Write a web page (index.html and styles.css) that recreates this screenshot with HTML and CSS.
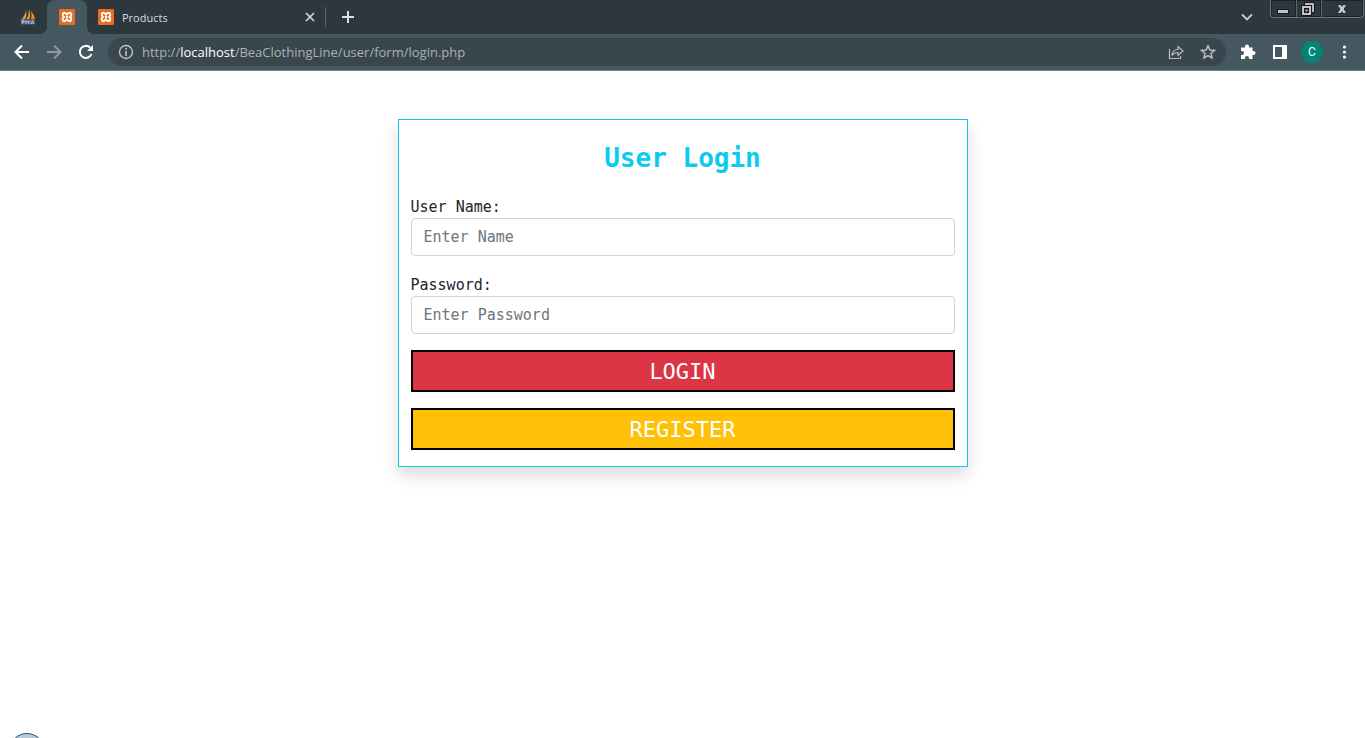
FILE: index.html
```html
<!DOCTYPE html>
<html lang="en">
<head>
<meta charset="utf-8">
<meta name="viewport" content="width=device-width, initial-scale=1">
<title>User Login</title>
<link rel="stylesheet" href="styles.css">
</head>
<body>
<svg class="defs" aria-hidden="true">
  <symbol id="xampp" viewBox="0 0 16 16">
    <rect width="16" height="16" rx="1" fill="#ea6c1d"/>
    <path d="M8 5.500Q6.500 3.800 5 3.800Q3.600 4 3.700 5.800Q3.800 7.200 5 8Q3.800 8.800 3.700 10.200Q3.600 12 5 12.200Q6.500 12.200 8 10.500Q9.500 12.200 11 12.200Q12.400 12 12.300 10.200Q12.200 8.800 11 8Q12.200 7.200 12.300 5.800Q12.400 4 11 3.800Q9.500 3.800 8 5.500ZM7 8H9" fill="none" stroke="#fff" stroke-width="1.900"/>
  </symbol>
</svg>
<header class="browser">
  <div class="tab-strip">
    <button class="tab tab-pinned" aria-label="phpMyAdmin">
      <svg width="16" height="16" viewBox="0 0 16 16"><path d="M6 1Q7 6 5.500 10L1 11Q5 7 6 1Z" fill="#d9a35a"/><path d="M9 0Q11 5 9.500 10L6.500 10.500Q9 6 9 0Z" fill="#f89c0e"/><path d="M11 2Q14 5 15 10L11 10.500Q12 6 11 2Z" fill="#f58a08"/><path d="M.5 10.500H15.500L14 15.500H1.500Z" fill="#565b8c"/><path d="M2 15V11.500H4V13.500H2M6 15V11.500L7.500 13.500L9 11.500V15M11 15L12.500 11.500L14 15M11.500 14H13.500" fill="none" stroke="#b8bbd6"/></svg>
    </button>
    <button class="tab tab-active" aria-label="User Login"><svg width="16" height="16"><use href="#xampp"/></svg></button>
    <div class="tab tab-wide">
      <svg width="16" height="16"><use href="#xampp"/></svg>
      <span class="tab-title">Products</span>
      <button class="icon-btn" aria-label="Close tab"><svg width="16" height="16" viewBox="0 0 16 16"><path d="M4 4L12 12M12 4L4 12" stroke="#d5d9dc" stroke-width="1.700"/></svg></button>
    </div>
    <button class="icon-btn new-tab" aria-label="New tab"><svg width="16" height="16" viewBox="0 0 16 16"><path d="M8 2V14M2 8H14" stroke="#dde0e2" stroke-width="2"/></svg></button>
    <button class="icon-btn tab-search" aria-label="Search tabs"><svg width="16" height="16" viewBox="0 0 16 16"><path d="M3 5.500L8 10.500L13 5.500" fill="none" stroke="#c9cdd0" stroke-width="1.800"/></svg></button>
    <div class="window-controls">
      <button aria-label="Minimize"><svg width="12" height="14" viewBox="0 0 12 14"><rect x=".5" y="7.500" width="11" height="4" fill="#c1c4c6" stroke="#15191b"/></svg></button>
      <button aria-label="Restore"><svg width="14" height="14" viewBox="0 0 14 14"><path d="M5 2H12V9H5Z" fill="none" stroke="#15191b" stroke-width="4"/><path d="M5 2H12V9H5Z" fill="none" stroke="#b4b8ba" stroke-width="2"/><path d="M2 5H9V12H2Z" fill="#20272b" stroke="#15191b" stroke-width="4"/><path d="M2 5H9V12H2Z" fill="#15191b" stroke="#c1c4c6" stroke-width="2"/><path d="M4.500 7.500H6.500V9.500H4.500Z" fill="#c1c4c6"/></svg></button>
      <button class="window-close" aria-label="Close"><svg width="14" height="14" viewBox="0 0 14 14"><path d="M2 2.500H6L7 4.200L8 2.500H12L9.200 7L12 11.500H8L7 9.800L6 11.500H2L4.800 7Z" fill="#c1c4c6" stroke="#15191b" stroke-width=".8"/></svg></button>
    </div>
  </div>
  <div class="toolbar">
    <div class="nav">
      <button class="icon-btn" aria-label="Back"><svg width="16" height="16" viewBox="0 0 16 16"><path d="M15 8H2M8 1.500L1.500 8L8 14.500" fill="none" stroke="#fff" stroke-width="2"/></svg></button>
      <button class="icon-btn" aria-label="Forward"><svg width="16" height="16" viewBox="0 0 16 16"><path d="M1 8H14M8 1.500L14.500 8L8 14.500" fill="none" stroke="#8f999f" stroke-width="2"/></svg></button>
      <button class="icon-btn" aria-label="Reload"><svg width="16" height="16" viewBox="0 0 16 16"><path d="M13.500 10A6 6 0 1 1 12.200 3.700" fill="none" stroke="#fff" stroke-width="2"/><path d="M15 1V7H9Z" fill="#fff"/></svg></button>
    </div>
    <div class="address">
      <svg width="16" height="16" viewBox="0 0 16 16"><circle cx="8" cy="8" r="6.500" fill="none" stroke="#bdc3c7" stroke-width="1.400"/><path d="M8 7V12M8 4V5.800" stroke="#bdc3c7" stroke-width="1.600"/></svg>
      <span class="url">http://<span class="host">localhost</span>/BeaClothingLine/user/form/login.php</span>
      <button class="icon-btn" aria-label="Share"><svg width="16" height="16" viewBox="0 0 16 16"><path d="M1.500 5V14.500H12.500V12M4 11.500Q4.500 5.500 10 5.500V2.500L15 7L10 11.500V8.500Q6 8.500 4 11.500Z" fill="none" stroke="#b5bbbf" stroke-width="1.200"/></svg></button>
      <button class="icon-btn" aria-label="Bookmark"><svg width="16" height="16" viewBox="0 0 16 16"><path d="M8 1.700L9.900 6L14.500 6.400L11 9.500L12.100 14L8 11.600L3.900 14L5 9.500L1.500 6.400L6.100 6Z" fill="none" stroke="#bdc3c7" stroke-width="1.400"/></svg></button>
    </div>
    <div class="actions">
      <button class="icon-btn" aria-label="Extensions"><svg width="16" height="16" viewBox="0 0 16 16"><path d="M1 3.500H5V2.500A2 2 0 0 1 9 2.500V3.500H12.500V7H13.500A2 2 0 0 1 13.500 11H12.500V15H9V14A2 2 0 0 0 5 14V15H1V11H2A2 2 0 0 0 2 7H1Z" fill="#fff"/></svg></button>
      <button class="icon-btn" aria-label="Side panel"><svg width="16" height="16" viewBox="0 0 16 16"><path d="M1 1H15V15H1ZM3 3V13H10V3Z" fill="#fff" fill-rule="evenodd"/></svg></button>
      <button class="avatar" aria-label="Profile">C</button>
      <button class="icon-btn" aria-label="Menu"><svg width="16" height="16" viewBox="0 0 16 16"><g fill="#fff"><circle cx="8.500" cy="3" r="1.600"/><circle cx="8.500" cy="8" r="1.600"/><circle cx="8.500" cy="13" r="1.600"/></g></svg></button>
    </div>
  </div>
</header>
<main class="page">
  <form class="card" onsubmit="return false">
    <h1 class="title">User Login</h1>
    <div class="field">
      <label for="name">User Name:</label>
      <input id="name" type="text" placeholder="Enter Name">
    </div>
    <div class="field">
      <label for="password">Password:</label>
      <input id="password" type="password" placeholder="Enter Password">
    </div>
    <button class="submit login" type="submit">LOGIN</button>
    <button class="submit register" type="button">REGISTER</button>
  </form>
</main>
<div class="orb" aria-hidden="true"></div>
</body>
</html>
```
FILE: styles.css
```css
* { box-sizing: border-box; }
body {
  margin: 0;
  height: 100vh;
  overflow: hidden;
  background: #fff;
  color: #212529;
  font-family: "DejaVu Sans Mono", monospace;
}
button { margin: 0; padding: 0; border: 0; background: none; font: inherit; color: inherit; }
svg { display: block; flex: none; }
.defs { position: absolute; width: 0; height: 0; }

.browser { font-family: "Open Sans", sans-serif; }
.icon-btn { flex: none; width: 16px; height: 16px; }

.tab-strip { display: flex; align-items: center; height: 34px; background: #2d383e; }
.tab { display: flex; align-items: center; justify-content: center; height: 34px; }
.tab-pinned { width: 47px; padding-left: 8px; }
.tab-active { position: relative; width: 40px; border-radius: 8px 8px 0 0; background: #455861; }
.tab-active::before, .tab-active::after {
  content: "";
  position: absolute;
  bottom: 0;
  width: 8px;
  height: 8px;
}
.tab-active::before { right: 100%; background: radial-gradient(circle at 0 0, #2d383e 8px, #455861 8px); }
.tab-active::after { left: 100%; background: radial-gradient(circle at 100% 0, #2d383e 8px, #455861 8px); }
.tab-wide { width: 239px; padding: 0 8px 0 11px; gap: 8px; background: linear-gradient(#58666d, #58666d) right center / 1px 20px no-repeat; }
.tab-title { flex: 1; text-align: left; font-size: 11px; color: #d8dcde; }
.new-tab { margin-left: 14px; }
.tab-search { margin-left: auto; margin-right: 15px; }
.window-controls {
  display: flex;
  align-self: flex-start;
  height: 18px;
  margin-right: 1px;
  border: 1px solid #6b767b;
  border-top: 0;
  border-radius: 0 0 4px 4px;
  box-shadow: inset 0 0 0 1px #1b2225;
}
.window-controls button { display: flex; align-items: center; justify-content: center; width: 25px; border-right: 1px solid #1b2225; box-shadow: 1px 0 #59656b; }
.window-controls .window-close { width: 42px; border: 0; box-shadow: none; }

.toolbar { display: flex; align-items: center; height: 37px; padding: 0 13px 0 14px; border-bottom: 1px solid #6f7f87; background: #455861; }
.nav { display: flex; gap: 16px; margin-right: 14px; }
.address { display: flex; flex: 1; align-items: center; gap: 16px; height: 28px; padding: 0 10px; border-radius: 14px; background: #39464d; }
.url { flex: 1; margin-left: -8px; color: #aab1b5; font-size: 13px; white-space: nowrap; }
.host { color: #fff; }
.actions { display: flex; align-items: center; gap: 16px; margin-left: 14px; }
.avatar { width: 22px; height: 22px; margin: 0 -3px; border-radius: 50%; background: #008577; color: #fff; font: 12px Roboto, sans-serif; }

.page { padding: 48px 12px 0; }
.card {
  display: flex;
  flex-direction: column;
  gap: 16px;
  max-width: 570px;
  margin: 0 auto;
  padding: 16px 12px;
  border: 1px solid #0dcaf0;
  background: #fff;
  box-shadow: 0 8px 16px rgba(0, 0, 0, .15);
}
.title { margin: 0; padding: 5px 0; color: #0dcaf0; font-size: 26px; font-weight: 700; line-height: 34px; text-align: center; }
.field { display: flex; flex-direction: column; margin-bottom: 2px; }
.field + .field { margin-bottom: 0; }
.field label { font-size: 15px; line-height: 22px; }
.field input {
  width: 100%;
  height: 38px;
  padding: 6px 12px;
  border: 1px solid #ced4da;
  border-radius: 4px;
  background: #fff;
  color: #212529;
  font: 15px/24px "DejaVu Sans Mono", monospace;
}
.field input::placeholder { color: #6c757d; opacity: 1; }
.submit { height: 42px; padding-top: 2px; border: 2px solid #000; color: #fff; font-size: 22px; line-height: 36px; }
.login { background: #dc3545; }
.register { background: #ffc107; }

.orb { position: fixed; left: 9px; bottom: -31px; width: 36px; height: 36px; border: 1px solid #1d4f7e; border-radius: 50%; background: #b9cad9; }
```
